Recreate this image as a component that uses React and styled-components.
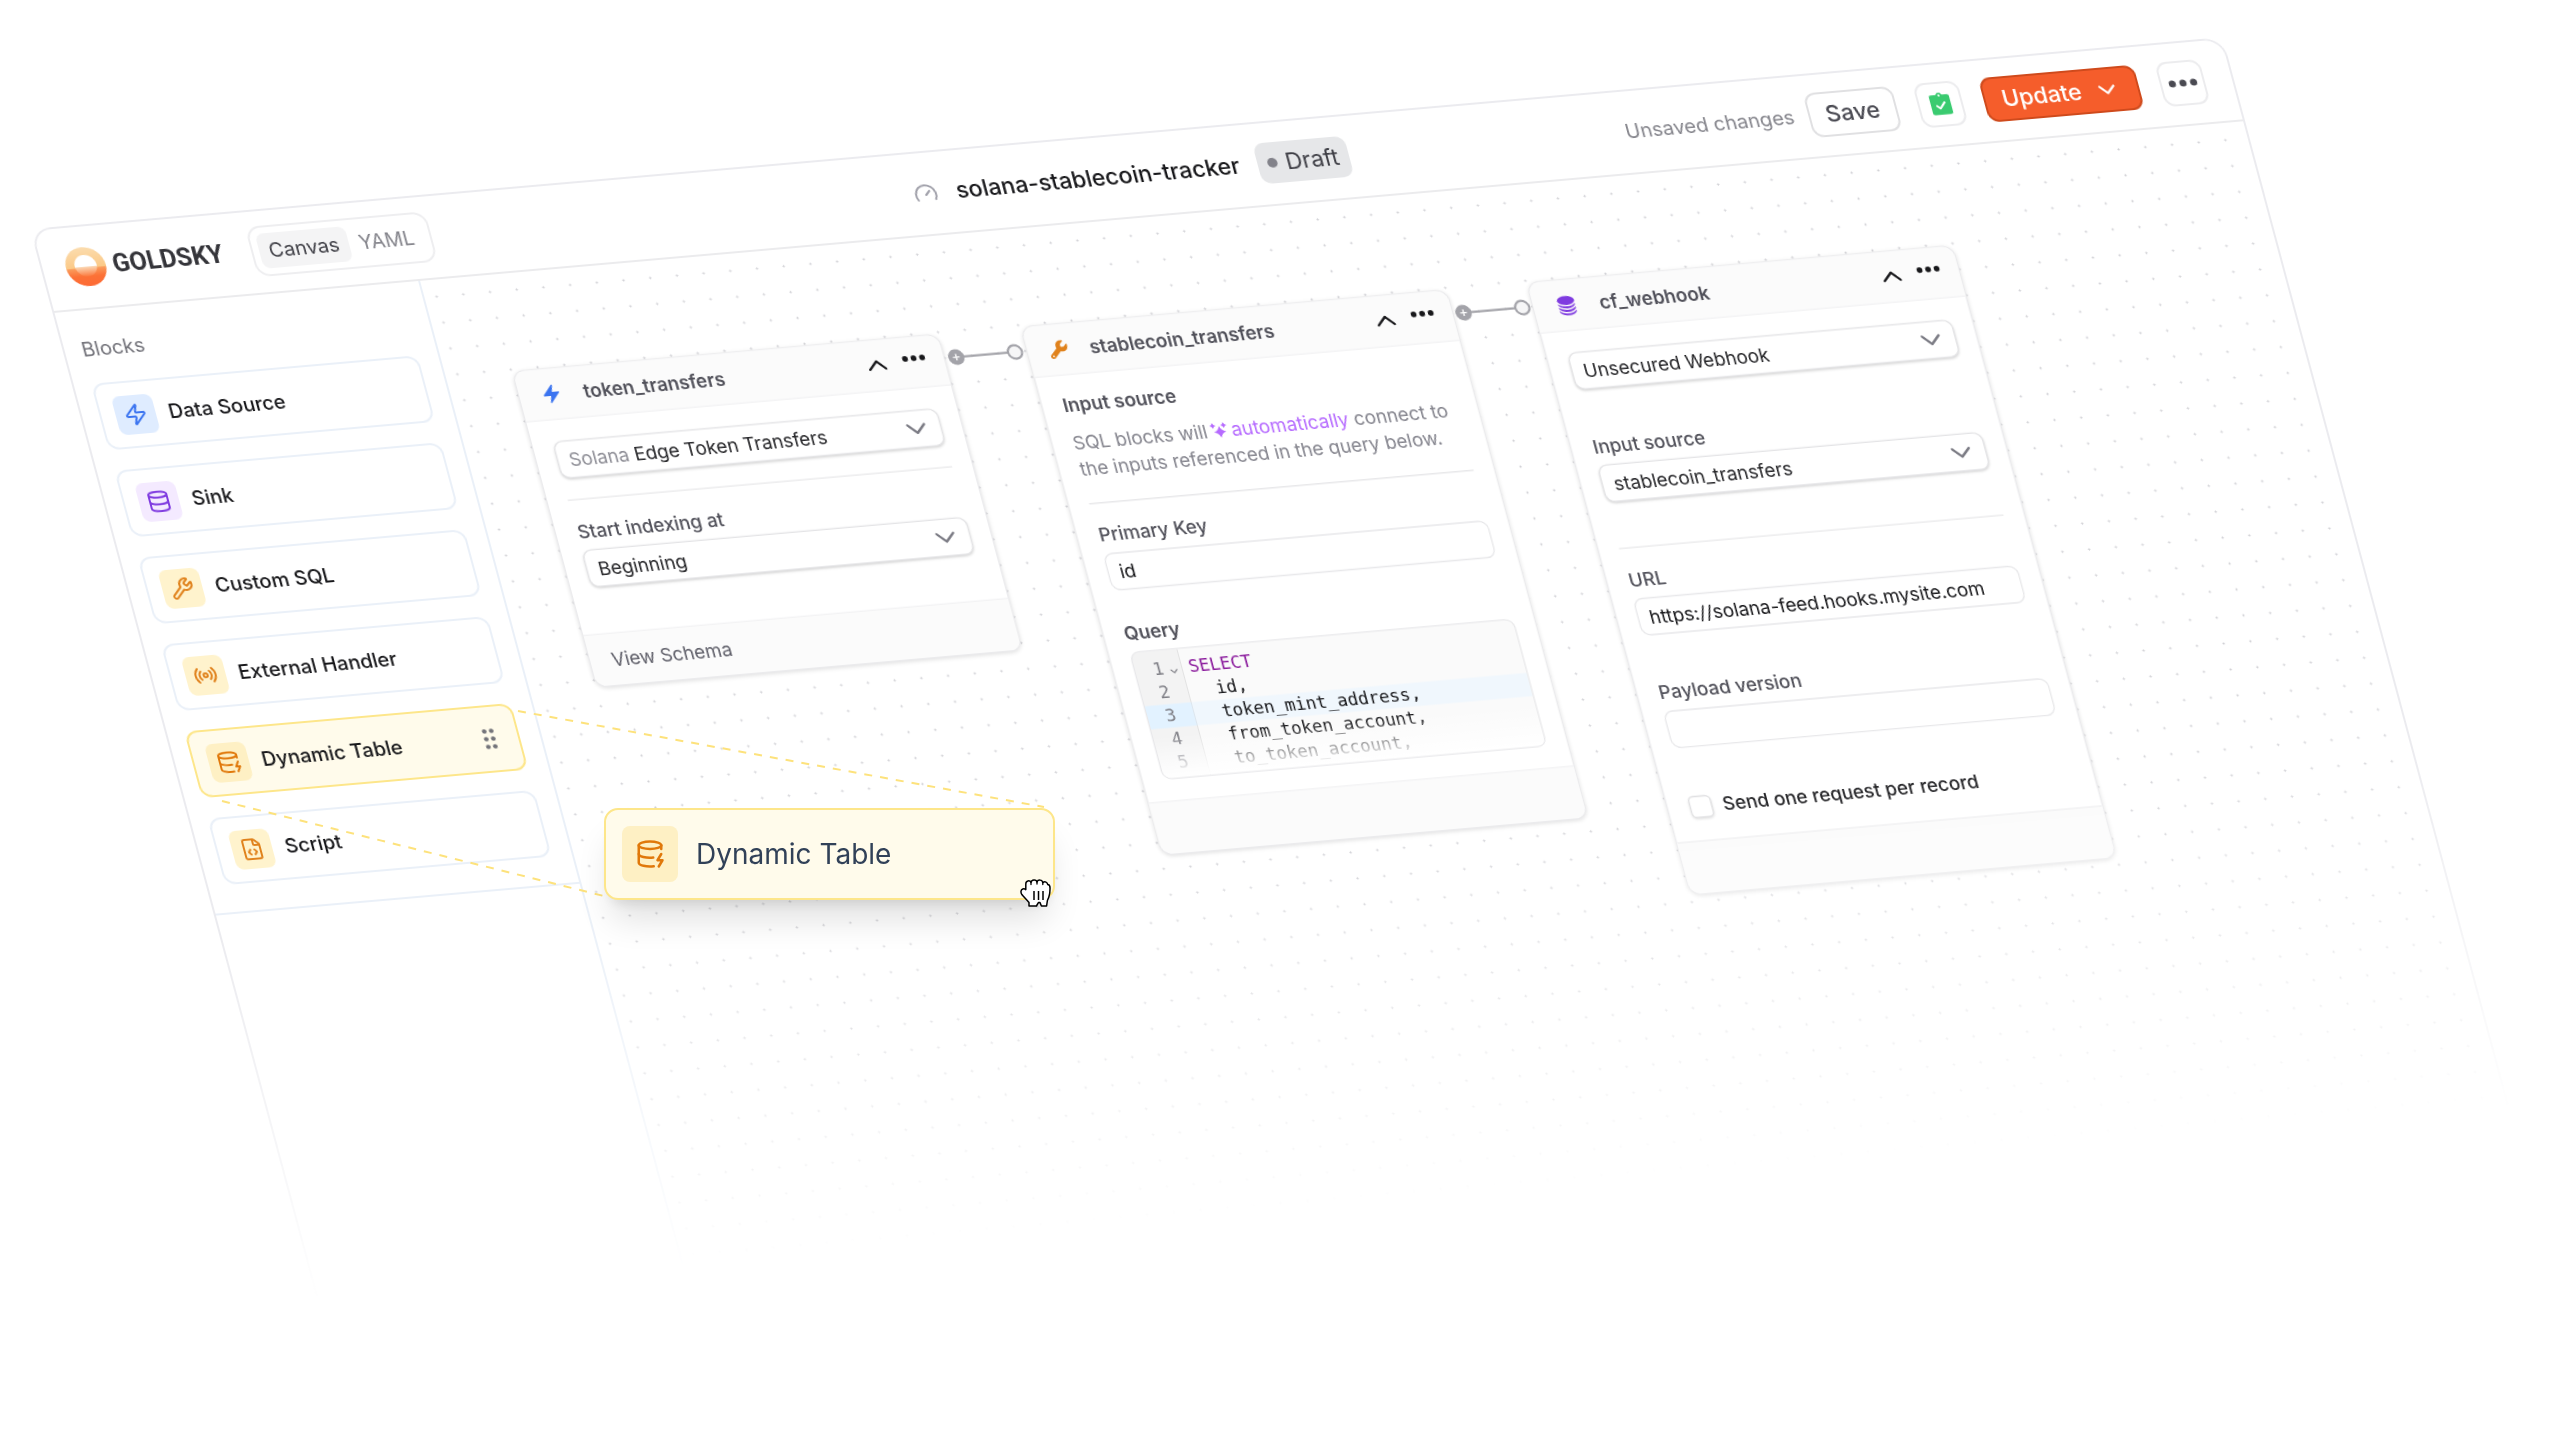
import React, { useState } from 'react';
import styled, { createGlobalStyle } from 'styled-components';
import {
  ChevronDown,
  ChevronUp,
  Database,
  DatabaseZap,
  FileCode,
  Gauge,
  Radio,
  Wrench,
  Zap,
} from 'lucide-react';
import { HiBolt, HiCircleStack } from 'react-icons/hi2';
import { FaWrench } from 'react-icons/fa6';

const GlobalStyle = createGlobalStyle`
  * {
    box-sizing: border-box;
  }

  body {
    margin: 0;
    background: #fff;
    color: #27272a;
    font-family: Inter, 'Liberation Sans', sans-serif;
    -webkit-font-smoothing: antialiased;
  }

  button,
  input,
  select {
    font: inherit;
    color: inherit;
  }

  h1,
  h2,
  h3,
  p,
  ul {
    margin: 0;
    padding: 0;
  }
`;

const Page = styled.main`
  position: relative;
  height: 100vh;
  overflow: hidden;
  padding: 229px 0 0 30px;
`;

// the whole editor lies on a tilted plane: x axis -5deg, y axis 15deg
const Window = styled.div`
  display: flex;
  flex-direction: column;
  width: 87%;
  height: 79vh;
  min-height: 1108px;
  border: 2px solid #ebebef;
  border-radius: 20px;
  background: #fff;
  overflow: hidden;
  transform: matrix(0.9962, -0.0872, 0.2588, 0.9659, 0, 0);
  transform-origin: 0 0;
  mask-image: linear-gradient(#000 64%, transparent 98%);
`;

/* ---------- header ---------- */

const Header = styled.header`
  display: grid;
  grid-template-columns: 1fr auto 1fr;
  align-items: center;
  flex: none;
  height: 85px;
  padding: 0 27px 2px 23px;
  border-bottom: 2px solid #ebebed;
`;

const HeaderLeft = styled.div`
  display: flex;
  align-items: center;
  gap: 28px;
`;

const Brand = styled.a`
  display: flex;
  align-items: center;
  gap: 7px;
  color: #35353a;
  font-family: Roboto, 'Liberation Sans', sans-serif;
  font-size: 25px;
  font-weight: 700;
  line-height: 32px;
  text-decoration: none;
`;

const Tabs = styled.div`
  display: flex;
  padding: 6px;
  border: 2px solid #eeeef0;
  border-radius: 14px;
`;

const Tab = styled.button`
  height: 36px;
  padding: 0 10px;
  border: none;
  border-radius: 8px;
  background: ${({ $active }) => ($active ? '#f4f4f5' : 'transparent')};
  color: ${({ $active }) => ($active ? '#3f3f46' : '#85858c')};
  font-size: 20px;
  cursor: pointer;
`;

const TitleGroup = styled.div`
  display: flex;
  align-items: center;
  gap: 18px;
  padding-right: 8px;
  color: #9f9fa9;
`;

const Title = styled.h1`
  color: #18181b;
  font-size: 23px;
  font-weight: 500;
  line-height: 32px;
`;

const Badge = styled.span`
  display: flex;
  align-items: center;
  gap: 8px;
  height: 42px;
  padding: 0 10px;
  border-radius: 10px;
  background: #e6e7e9;
  color: #3f3f46;
  font-size: 23px;

  &::before {
    content: '';
    width: 10px;
    height: 10px;
    border-radius: 50%;
    background: #82828a;
  }
`;

const HeaderRight = styled.div`
  display: flex;
  align-items: center;
  justify-content: flex-end;
  gap: 21px;
`;

const SaveGroup = styled.div`
  display: flex;
  align-items: center;
  gap: 14px;
  color: #85858c;
  font-size: 20px;
`;

const HeaderButton = styled.button`
  display: flex;
  align-items: center;
  gap: 12px;
  height: 46px;
  padding: 0 16px;
  border: 2px solid #e0e0e2;
  border-radius: 11px;
  background: #fff;
  color: #4a4a52;
  font-size: 23px;
  font-weight: 500;
  cursor: pointer;
`;

const PrimaryButton = styled(HeaderButton)`
  border-color: #cf4a1c;
  background: #f55d2b;
  color: #fff;
`;

const IconButton = styled(HeaderButton)`
  justify-content: center;
  width: 45px;
  padding: 0;
  border-color: #ececee;
`;

/* ---------- sidebar ---------- */

const Body = styled.div`
  display: flex;
  flex: 1;
  min-height: 0;
`;

const Sidebar = styled.aside`
  flex: none;
  width: 367px;
  border-right: 2px solid #eaf0f8;
`;

const Blocks = styled.section`
  padding: 28px 20px 28px 17px;
  border-bottom: 2px solid #eaf0f8;
`;

const BlocksTitle = styled.h2`
  margin-bottom: 23px;
  color: #74747b;
  font-size: 20px;
  font-weight: 400;
  line-height: 24px;
`;

const BlockList = styled.ul`
  display: flex;
  flex-direction: column;
  gap: 21px;
  list-style: none;
`;

const Block = styled.li`
  display: flex;
  align-items: center;
  gap: 13px;
  height: 69px;
  padding: 0 22px 0 14px;
  border: 2px solid ${({ $active }) => ($active ? '#fde68a' : '#eaf0f8')};
  border-radius: 12px;
  background: ${({ $active }) => ($active ? '#fffbeb' : '#fff')};
  color: #18181b;
  font-size: 20px;
  font-weight: 500;
  cursor: grab;
`;

const BlockName = styled.span`
  flex: 1;
`;

const tones = {
  blue: ['#dfecff', '#3b74f0'],
  purple: ['#f4eaff', '#7f3be0'],
  yellow: ['#fff3cd', '#e0821c'],
  amber: ['#fef0c4', '#e0780a'],
};

const BlockIcon = styled.span`
  display: grid;
  place-items: center;
  width: ${({ $large }) => ($large ? 56 : 40)}px;
  height: ${({ $large }) => ($large ? 56 : 40)}px;
  border-radius: 8px;
  background: ${({ $tone }) => tones[$tone][0]};
  color: ${({ $tone }) => tones[$tone][1]};
`;

/* ---------- canvas ---------- */

const Canvas = styled.div`
  flex: 1;
  min-width: 0;
  overflow: hidden;
`;

// zoomed flow plane, 20px grid
const Viewport = styled.div`
  position: relative;
  width: 75%;
  height: 75%;
  transform: scale(1.34);
  transform-origin: 0 0;
  background-image: radial-gradient(#cdcdd2 0.6px, transparent 1px);
  background-size: 20px 20px;
  background-position: -1px 3px;
`;

const NodeBox = styled.article`
  position: absolute;
  left: ${({ $x }) => $x}px;
  top: ${({ $y }) => $y}px;
  width: 320px;
  border: 1px solid #ebebed;
  border-radius: 9px;
  background: #fff;
  box-shadow: 0 1px 3px rgba(0, 0, 0, 0.12);
  font-size: 14px;
  line-height: 20px;
`;

const NodeHead = styled.header`
  display: flex;
  align-items: center;
  height: 39px;
  padding: 0 13px 0 16px;
  border-bottom: 1px solid #ebebed;
  border-radius: 8px 8px 0 0;
  background: #fbfbfb;
`;

const NodeTitle = styled.h2`
  flex: 1;
  margin-left: 16px;
  color: #52525b;
  font-size: 14px;
  font-weight: 600;
  line-height: 20px;
`;

const NodeActions = styled.div`
  display: flex;
  align-items: flex-start;
  gap: 7px;
`;

const GhostButton = styled.button`
  display: flex;
  padding: 0;
  border: none;
  background: none;
  color: #18181b;
  cursor: pointer;
`;

const MoreButton = styled(GhostButton)`
  padding: 6px 0;
`;

const NodeBody = styled.div`
  padding: ${({ $tight }) => ($tight ? 13 : 16)}px 15px 16px;
`;

const NodeFoot = styled.footer`
  height: 40px;
  padding: 10px 16px;
  border-top: 1px solid #ebebed;
  border-radius: 0 0 8px 8px;
  background: #fbfbfb;
  color: #60606a;
`;

const FootLink = styled.a`
  color: inherit;
  text-decoration: none;
`;

const Divider = styled.hr`
  height: 1px;
  margin: 16px 0 14px;
  border: none;
  background: #e8e8ea;
`;

const Field = styled.div`
  display: flex;
  flex-direction: column;
  gap: 4px;
  padding-bottom: ${({ $space = 0 }) => $space}px;
`;

const Label = styled.label`
  padding-left: 1px;
  color: #52525b;
  font-weight: 500;
`;

const Heading = styled.h3`
  color: #52525b;
  font-size: 14px;
  font-weight: 600;
  line-height: 20px;
`;

const Control = styled.div`
  display: flex;
  align-items: center;
  gap: 4px;
  height: 29px;
  padding: 0 5px 0 8px;
  border: 1px solid #e4e4e6;
  border-radius: 7px;
  background: #fff;
  box-shadow: 0 1px 2px rgba(0, 0, 0, 0.16);
  color: #7b7b84;
`;

const Prefix = styled.span`
  color: #8e8e96;
`;

const Select = styled.select`
  flex: 1;
  min-width: 0;
  height: 27px;
  padding: 0;
  border: none;
  outline: none;
  appearance: none;
  background: none;
  color: #27272a;
`;

const TextInput = styled.input`
  height: 29px;
  padding: 0 8px;
  border: 1px solid #e8e8ea;
  border-radius: 7px;
  outline: none;
  background: #fff;
  color: #18181b;
`;

const Hint = styled.p`
  margin-top: 9px;
  color: #85858e;
  white-space: nowrap;
`;

const Magic = styled.span`
  color: #b66bff;

  svg {
    margin: 0 3px -1px 2px;
  }
`;

const CheckRow = styled.label`
  display: flex;
  align-items: center;
  gap: 8px;
  padding-left: 1px;
  color: #27272a;
  font-weight: 500;
`;

const Checkbox = styled.input`
  width: 17px;
  height: 17px;
  margin: 0;
  border: 1px solid #e0e0e2;
  border-radius: 4px;
  appearance: none;
  background: #fff;
  box-shadow: 0 1px 2px rgba(0, 0, 0, 0.12);
`;

const Code = styled.div`
  position: relative;
  height: 99px;
  border: 1px solid #e8e8ea;
  border-radius: 7px;
  overflow: hidden;
  background: linear-gradient(90deg, #f3f3f3 34px, #e2e2e2 34px 35px, #fafafa 35px);
  padding: 5px 0;
  font-family: 'DejaVu Sans Mono', monospace;
  font-size: 13px;
  line-height: 18px;

  &::after {
    content: '';
    position: absolute;
    inset: auto 0 0;
    height: 32px;
    background: linear-gradient(rgba(255, 255, 255, 0), #fff);
  }
`;

const CodeLine = styled.div`
  display: grid;
  grid-template-columns: 21px 14px 1fr;
  height: 18px;
  background: ${({ $active }) =>
    $active ? 'linear-gradient(90deg, #e2f2ff 34px, #dde6ee 34px 35px, #f0f7fd 35px)' : 'none'};
  color: #18181b;
  white-space: pre;
`;

const LineNumber = styled.span`
  color: #7d7d84;
  text-align: right;
`;

const Fold = styled.span`
  display: flex;
  justify-content: center;
  padding-top: 7px;
  color: #7d7d84;
`;

const CodeText = styled.code`
  padding-left: 5px;
  font: inherit;
  color: ${({ $keyword }) => ($keyword ? '#8a1a9c' : 'inherit')};
`;

const Edge = styled.svg`
  position: absolute;
  left: ${({ $x }) => $x}px;
  top: 86px;
`;

/* ---------- drag preview ---------- */

const Guides = styled.svg`
  position: absolute;
  left: 0;
  top: 0;
  pointer-events: none;
`;

const DragCard = styled.div`
  position: absolute;
  left: 604px;
  top: 808px;
  display: flex;
  align-items: center;
  gap: 18px;
  width: 451px;
  height: 92px;
  padding: 0 16px;
  border: 2px solid #fde68a;
  border-radius: 14px;
  background: #fffbeb;
  box-shadow: 0 26px 34px -7px rgba(0, 0, 0, 0.12), 0 10px 14px -8px rgba(0, 0, 0, 0.12);
  color: #314158;
  font-size: 28px;
  font-weight: 400;
`;

const Cursor = styled.svg`
  position: absolute;
  right: 2px;
  bottom: -9px;
`;

/* ---------- drawings ---------- */

const Logo = () => (
  <svg width="40" height="40" viewBox="0 0 40 40" aria-hidden="true">
    <defs>
      <linearGradient id="logo-sky" x1="0" y1="0" x2="0" y2="1">
        <stop offset="0" stopColor="#fbdcae" />
        <stop offset="0.53" stopColor="#fbc987" />
        <stop offset="0.54" stopColor="#fa9c5c" />
        <stop offset="0.75" stopColor="#fc7136" />
        <stop offset="1" stopColor="#fd6a35" />
      </linearGradient>
      <linearGradient id="logo-sun" x1="0" y1="0" x2="0" y2="1">
        <stop offset="0" stopColor="#fff" />
        <stop offset="0.55" stopColor="#fff" />
        <stop offset="0.57" stopColor="#fbd3ae" />
        <stop offset="1" stopColor="#fc7a3f" />
      </linearGradient>
    </defs>
    <circle cx="20" cy="20" r="20" fill="url(#logo-sky)" />
    <circle cx="20" cy="19" r="11" fill="url(#logo-sun)" />
  </svg>
);

const Dots = ({ width = 18 }) => (
  <svg width={width} height={width / 3} viewBox="0 0 18 6" aria-hidden="true">
    <circle cx="2.6" cy="3" r="2.1" fill="currentColor" />
    <circle cx="9" cy="3" r="2.1" fill="currentColor" />
    <circle cx="15.4" cy="3" r="2.1" fill="currentColor" />
  </svg>
);

const ClipboardCheck = () => (
  <svg width="26" height="26" viewBox="0 0 24 24" aria-hidden="true">
    <path
      fill="#3acb70"
      d="M12 1a3 3 0 0 0-2.8 2H4.500A1.800 1.800 0 0 0 2.700 4.800V20a2 2 0 0 0 2 2h14.600a2 2 0 0 0 2-2V4.800A1.800 1.800 0 0 0 19.500 3h-4.700A3 3 0 0 0 12 1Z"
    />
    <circle cx="12" cy="3.600" r="1" fill="#fff" />
    <path
      d="m8.200 13.400 2.600 2.600 5-5.600"
      fill="none"
      stroke="#fff"
      strokeWidth="1.800"
      strokeLinecap="round"
      strokeLinejoin="round"
    />
  </svg>
);

const Grip = () => (
  <svg width="12" height="21" viewBox="0 0 12 21" fill="#74747a" aria-hidden="true">
    {[2.5, 10.5, 18.5].map((y) => (
      <g key={y}>
        <circle cx="2.5" cy={y} r="2.3" />
        <circle cx="9.5" cy={y} r="2.3" />
      </g>
    ))}
  </svg>
);

const Sparkles = () => (
  <svg width="13" height="13" viewBox="0 0 24 24" fill="currentColor" aria-hidden="true">
    <path d="M13 6c1.600 4.600 3.800 6.800 8.500 8.500-4.700 1.700-6.900 3.900-8.500 8.500-1.600-4.600-3.800-6.800-8.500-8.500C9.200 12.800 11.400 10.600 13 6Z" />
    <path d="M4.500 1c.8 2.600 1.700 3.600 4.300 4.500-2.600.9-3.500 1.900-4.300 4.500C3.700 7.400 2.800 6.400.2 5.500 2.800 4.600 3.700 3.600 4.500 1Z" />
    <path d="M19.500 1c.8 2.600 1.700 3.600 4.300 4.500-2.600.9-3.500 1.900-4.300 4.500-.8-2.600-1.700-3.600-4.300-4.500 2.600-.9 3.500-1.900 4.300-4.500Z" />
  </svg>
);

const Connection = ({ x }) => (
  <Edge $x={x} width="58" height="14" viewBox="0 0 58 14" aria-hidden="true">
    <path d="M7 7h44" stroke="#a3a3a9" strokeWidth="1.6" />
    <circle cx="7.500" cy="7" r="6" fill="#a3a3a9" />
    <path d="M5 7h5M7.500 4.500v5" stroke="#fff" strokeWidth="1" />
    <circle cx="51.500" cy="7" r="5.200" fill="#f6f6f7" stroke="#a3a3a9" strokeWidth="1.600" />
  </Edge>
);

const GrabCursor = () => (
  <Cursor width="31" height="28" viewBox="0 0 31 28" aria-hidden="true">
    <path
      d="M9 27v-3.500C6.500 20.500 4 18 1.800 15.500.4 13 .8 10.800 2.800 10c1.200-.4 2.200 0 3 .6V5c0-3.600 4-4 5.200-1.600C11.400.4 16.400 0 17 3c1-2.800 5.400-2.400 5.800.6 2.200-1.600 4.600-.4 5 2 2 .2 2.400 2 2.200 4.400 0 5-.8 8-2.600 11.500L26.600 27h-5.200L20 23.600h-1.600L16.400 27Z"
      fill="#fff"
      stroke="#000"
      strokeWidth="1.500"
      strokeLinejoin="round"
    />
    <path d="M14 12v9M18.500 12v9M23 12v9" stroke="#000" strokeWidth="1.500" />
    <path
      d="M11 3.500v2M17 3v2M22.800 3.600v2"
      stroke="#000"
      strokeWidth="1.300"
      strokeLinecap="round"
    />
  </Cursor>
);

/* ---------- data ---------- */

const blocks = [
  { name: 'Data Source', Icon: Zap, tone: 'blue' },
  { name: 'Sink', Icon: Database, tone: 'purple' },
  { name: 'Custom SQL', Icon: Wrench, tone: 'yellow' },
  { name: 'External Handler', Icon: Radio, tone: 'yellow' },
  { name: 'Dynamic Table', Icon: DatabaseZap, tone: 'amber', active: true },
  { name: 'Script', Icon: FileCode, tone: 'yellow' },
];

const query = [
  'SELECT',
  '  id,',
  '  token_mint_address,',
  '  from_token_account,',
  '  to_token_account,',
];

const SelectField = ({ id, label, prefix, value, space }) => (
  <Field $space={space}>
    {label && <Label htmlFor={id}>{label}</Label>}
    <Control>
      {prefix && <Prefix>{prefix}</Prefix>}
      <Select id={id} aria-label={label || value}>
        <option>{value}</option>
      </Select>
      <ChevronDown size={25} strokeWidth={1.75} />
    </Control>
  </Field>
);

const FlowNode = ({ x, title, icon, foot, tight, children }) => (
  <NodeBox $x={x} $y={74}>
    <NodeHead>
      {icon}
      <NodeTitle>{title}</NodeTitle>
      <NodeActions>
        <GhostButton aria-label="Collapse">
          <ChevronUp size={24} strokeWidth={1.75} />
        </GhostButton>
        <MoreButton aria-label="More">
          <Dots />
        </MoreButton>
      </NodeActions>
    </NodeHead>
    <NodeBody $tight={tight}>{children}</NodeBody>
    <NodeFoot>{foot}</NodeFoot>
  </NodeBox>
);

const App = () => {
  const [tab, setTab] = useState('Canvas');
  const [primaryKey, setPrimaryKey] = useState('id');
  const [url, setUrl] = useState('https://solana-feed.hooks.mysite.com');
  const [version, setVersion] = useState('');

  return (
    <Page>
      <GlobalStyle />
      <Window>
        <Header>
          <HeaderLeft>
            <Brand href="#">
              <Logo />
              GOLDSKY
            </Brand>
            <Tabs>
              {['Canvas', 'YAML'].map((name) => (
                <Tab key={name} $active={tab === name} onClick={() => setTab(name)}>
                  {name}
                </Tab>
              ))}
            </Tabs>
          </HeaderLeft>
          <TitleGroup>
            <Gauge size={24} strokeWidth={2} />
            <Title>solana-stablecoin-tracker</Title>
            <Badge>Draft</Badge>
          </TitleGroup>
          <HeaderRight>
            <SaveGroup>
              Unsaved changes
              <HeaderButton>Save</HeaderButton>
            </SaveGroup>
            <IconButton aria-label="Validation passed">
              <ClipboardCheck />
            </IconButton>
            <PrimaryButton>
              Update
              <ChevronDown size={28} strokeWidth={2} />
            </PrimaryButton>
            <IconButton aria-label="More actions">
              <Dots width={30} />
            </IconButton>
          </HeaderRight>
        </Header>

        <Body>
          <Sidebar>
            <Blocks>
              <BlocksTitle>Blocks</BlocksTitle>
              <BlockList>
                {blocks.map(({ name, Icon, tone, active }) => (
                  <Block key={name} $active={active}>
                    <BlockIcon $tone={tone}>
                      <Icon size={24} strokeWidth={2} />
                    </BlockIcon>
                    <BlockName>{name}</BlockName>
                    {active && <Grip />}
                  </Block>
                ))}
              </BlockList>
            </Blocks>
          </Sidebar>

          <Canvas>
            <Viewport>
              <FlowNode
                x={49}
                title="token_transfers"
                icon={<HiBolt size={16} color="#3b74f0" />}
                foot={<FootLink href="#">View Schema</FootLink>}
              >
                <SelectField id="dataset" prefix="Solana" value="Edge Token Transfers" />
                <Divider />
                <SelectField id="start" label="Start indexing at" value="Beginning" space={19} />
              </FlowNode>

              <FlowNode
                x={430}
                title="stablecoin_transfers"
                icon={<FaWrench size={14} color="#e0821c" />}
                tight
              >
                <Heading>Input source</Heading>
                <Hint>
                  SQL blocks will
                  <Magic>
                    <Sparkles />
                    automatically
                  </Magic>{' '}
                  connect to
                  <br />
                  the inputs referenced in the query below.
                </Hint>
                <Divider />
                <Field $space={23}>
                  <Label htmlFor="primary-key">Primary Key</Label>
                  <TextInput
                    id="primary-key"
                    value={primaryKey}
                    onChange={(e) => setPrimaryKey(e.target.value)}
                  />
                </Field>
                <Field>
                  <Heading>Query</Heading>
                  <Code>
                    {query.map((line, i) => (
                      <CodeLine key={line} $active={i === 2}>
                        <LineNumber>{i + 1}</LineNumber>
                        <Fold>{i === 0 && <ChevronDown size={9} strokeWidth={2.5} />}</Fold>
                        <CodeText $keyword={i === 0}>{line}</CodeText>
                      </CodeLine>
                    ))}
                  </Code>
                </Field>
              </FlowNode>

              <FlowNode
                x={809}
                title="cf_webhook"
                icon={<HiCircleStack size={17} color="#7f3be0" />}
              >
                <SelectField id="webhook" value="Unsecured Webhook" space={34} />
                <SelectField id="source" label="Input source" value="stablecoin_transfers" space={19} />
                <Divider />
                <Field $space={34}>
                  <Label htmlFor="url">URL</Label>
                  <TextInput id="url" value={url} onChange={(e) => setUrl(e.target.value)} />
                </Field>
                <Field $space={35}>
                  <Label htmlFor="version">Payload version</Label>
                  <TextInput
                    id="version"
                    value={version}
                    onChange={(e) => setVersion(e.target.value)}
                  />
                </Field>
                <CheckRow>
                  <Checkbox type="checkbox" />
                  Send one request per record
                </CheckRow>
              </FlowNode>

              <Connection x={370} />
              <Connection x={750} />
            </Viewport>
          </Canvas>
        </Body>
      </Window>

      <Guides width="1080" height="920" viewBox="0 0 1080 920" aria-hidden="true">
        <path
          d="M518 711 1044 807M222 801 604 896"
          stroke="#fde27c"
          strokeWidth="2"
          strokeDasharray="8 8"
        />
      </Guides>
      <DragCard>
        <BlockIcon $tone="amber" $large>
          <DatabaseZap size={30} strokeWidth={2} />
        </BlockIcon>
        Dynamic Table
        <GrabCursor />
      </DragCard>
    </Page>
  );
};

export default App;
